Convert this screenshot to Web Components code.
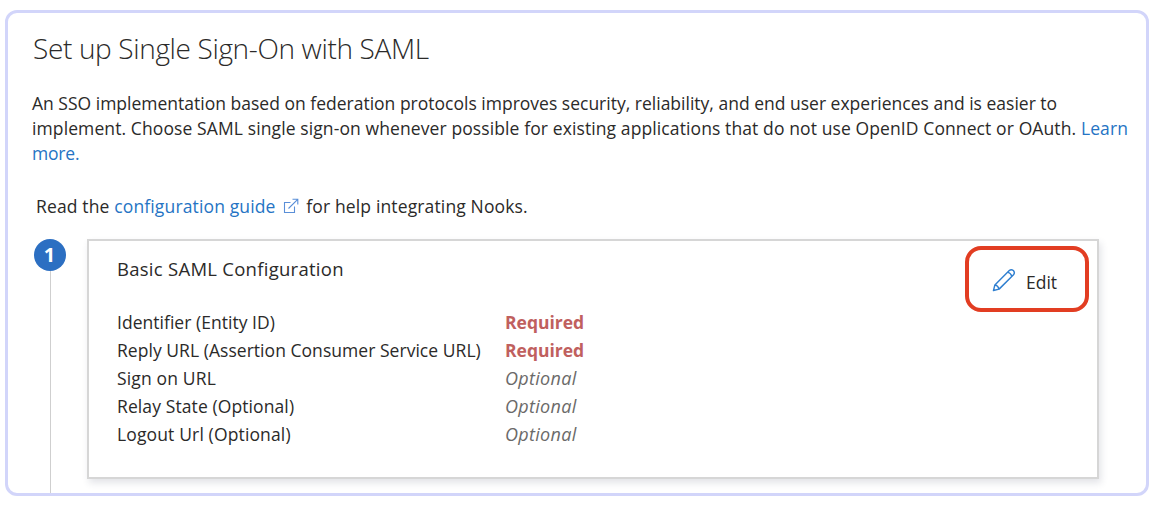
<!DOCTYPE html>
<html lang="en">
<head>
<meta charset="utf-8">
<title>Set up Single Sign-On with SAML</title>
<style>
	body {
		margin: 0;
		background: #fff;
		color: #2b2a29;
		font: 17.5px/25px "Open Sans", "Noto Sans", sans-serif;
	}
</style>
</head>
<body>
<sso-panel titulo="Set up Single Sign-On with SAML">
	<sso-line slot="intro" spacing="0.005">An SSO implementation based on federation protocols improves security, reliability, and end user experiences and is easier to</sso-line>
	<sso-line slot="intro" spacing="0.105">implement. Choose SAML single sign-on whenever possible for existing applications that do not use OpenID Connect or OAuth. <text-link>Learn</text-link></sso-line>
	<sso-line slot="intro" spacing="-0.19"><text-link>more.</text-link></sso-line>
	<sso-line slot="guide" spacing="0.14">Read the <text-link external>configuration guide</text-link> for help integrating Nooks.</sso-line>
	<setup-step number="1">
		<config-card titulo="Basic SAML Configuration">
			<edit-button slot="action">Edit</edit-button>
			<config-row label="Identifier (Entity ID)" spacing="0.03" required></config-row>
			<config-row label="Reply URL (Assertion Consumer Service URL)" spacing="0.04" required></config-row>
			<config-row label="Sign on URL" spacing="0.15"></config-row>
			<config-row label="Relay State (Optional)" spacing="0.1"></config-row>
			<config-row label="Logout Url (Optional)" spacing="0.14"></config-row>
		</config-card>
	</setup-step>
</sso-panel>

<script>
function attach(el, html) {
	const template = document.createElement("template");
	template.innerHTML = html;
	el.attachShadow({ mode: "open" });
	el.shadowRoot.appendChild(template.content.cloneNode(true));
}

class SsoPanel extends HTMLElement {
	constructor() {
		super();
		attach(this, `
<style>
	:host {
		display: flex;
		flex-direction: column;
		box-sizing: border-box;
		width: 1144px;
		height: 486px;
		margin: 10px 0 0 5px;
		padding: 16px 0 0 24px;
		border: 3px solid #d2d5fa;
		border-radius: 12px;
		overflow: hidden;
	}
	h1 {
		margin: 0;
		padding-left: 1px;
		font-size: 28px;
		font-weight: 300;
		line-height: 38px;
		letter-spacing: -0.35px;
	}
	.intro {
		margin-top: 24px;
	}
	.guide {
		margin: 28px 0 20px 4px;
	}
</style>
<h1></h1>
<div class="intro"><slot name="intro"></slot></div>
<div class="guide"><slot name="guide"></slot></div>
<slot></slot>`);
		this.shadowRoot.querySelector("h1").textContent = this.getAttribute("titulo");
	}
}

class SsoLine extends HTMLElement {
	constructor() {
		super();
		attach(this, `
<style>
	:host {
		display: block;
		white-space: nowrap;
	}
</style>
<slot></slot>`);
		this.style.letterSpacing = this.getAttribute("spacing") + "px";
	}
}

class TextLink extends HTMLElement {
	constructor() {
		super();
		attach(this, `
<style>
	:host {
		display: inline;
		color: #2574c4;
		cursor: pointer;
	}
	svg {
		display: none;
		width: 16px;
		height: 16px;
		margin: 0 3px 0 7px;
		vertical-align: -1px;
		fill: none;
		stroke: #5a8fd8;
		stroke-width: 1.1;
	}
	:host([external]) svg {
		display: inline-block;
	}
</style>
<slot></slot><svg viewBox="0 0 16 16"><path d="M7.5 4.5H1.5V14.5H11.5V8.5M5.5 10.5L14.7 1.3M9.5 1.2H14.8V6.5"/></svg>`);
	}
}

class SetupStep extends HTMLElement {
	constructor() {
		super();
		attach(this, `
<style>
	:host {
		display: flex;
		flex: 1;
		gap: 21px;
	}
	.rail {
		display: flex;
		flex-direction: column;
		align-items: center;
		width: 34px;
	}
	.number {
		width: 32px;
		height: 32px;
		margin-left: 1px;
		border-radius: 50%;
		background: #2c6fc2;
		color: #fff;
		font-size: 20px;
		font-weight: 700;
		line-height: 32px;
		text-align: center;
	}
	.line {
		flex: 1;
		width: 1px;
		margin-left: 2px;
		background: #cfcfcf;
	}
</style>
<div class="rail"><div class="number"></div><div class="line"></div></div>
<slot></slot>`);
		this.shadowRoot.querySelector(".number").textContent = this.getAttribute("number");
	}
}

class ConfigCard extends HTMLElement {
	constructor() {
		super();
		attach(this, `
<style>
	:host {
		display: block;
		box-sizing: border-box;
		width: 1012px;
		height: 240px;
		border: 2px solid #d6d6d6;
		box-shadow: 2px 4px 7px rgba(60, 65, 90, 0.14);
	}
	header {
		display: flex;
		justify-content: space-between;
		height: 68px;
		padding: 5px 8px 0 28px;
	}
	h2 {
		margin: 10px 0 0;
		font-size: 18.5px;
		font-weight: 400;
		line-height: 25px;
		letter-spacing: 0.27px;
	}
	.rows {
		padding-left: 28px;
		margin-top: -6px;
	}
</style>
<header><h2></h2><slot name="action"></slot></header>
<div class="rows"><slot></slot></div>`);
		this.shadowRoot.querySelector("h2").textContent = this.getAttribute("titulo");
	}
}

class ConfigRow extends HTMLElement {
	constructor() {
		super();
		attach(this, `
<style>
	:host {
		display: flex;
		line-height: 28px;
	}
	.label {
		width: 388px;
		white-space: nowrap;
	}
	.value {
		color: #6b6a69;
		font-size: 18px;
		font-style: italic;
		letter-spacing: 0.3px;
	}
	:host([required]) .value {
		color: #c0605e;
		font-size: 17.5px;
		font-style: normal;
		font-weight: 700;
		letter-spacing: 0;
	}
</style>
<span class="label"></span><span class="value"></span>`);
		const label = this.shadowRoot.querySelector(".label");
		label.textContent = this.getAttribute("label");
		label.style.letterSpacing = this.getAttribute("spacing") + "px";
		this.shadowRoot.querySelector(".value").textContent = this.hasAttribute("required") ? "Required" : "Optional";
	}
}

class EditButton extends HTMLElement {
	constructor() {
		super();
		attach(this, `
<style>
	:host {
		display: flex;
		align-items: center;
		box-sizing: border-box;
		width: 124px;
		height: 66px;
		padding: 6px 0 0 23px;
		gap: 10px;
		border: 4px solid #e23d22;
		border-radius: 16px;
		cursor: pointer;
	}
	svg {
		width: 24px;
		height: 24px;
		margin-top: -4px;
		fill: none;
		stroke: #2f7fd0;
		stroke-width: 1.5;
		stroke-linejoin: round;
	}
</style>
<svg viewBox="0 0 25 25"><path d="M1.5 23.5L3 17.6L18 2.6Q20 .9 22.3 2.6Q24.2 5 22.4 7L7.4 22ZM3 17.6Q6.3 18.2 7.4 22M16.3 4.3Q19.5 5.2 20.7 8.7"/></svg>
<slot></slot>`);
	}
}

customElements.define("sso-panel", SsoPanel);
customElements.define("sso-line", SsoLine);
customElements.define("text-link", TextLink);
customElements.define("setup-step", SetupStep);
customElements.define("config-card", ConfigCard);
customElements.define("config-row", ConfigRow);
customElements.define("edit-button", EditButton);
</script>
</body>
</html>
